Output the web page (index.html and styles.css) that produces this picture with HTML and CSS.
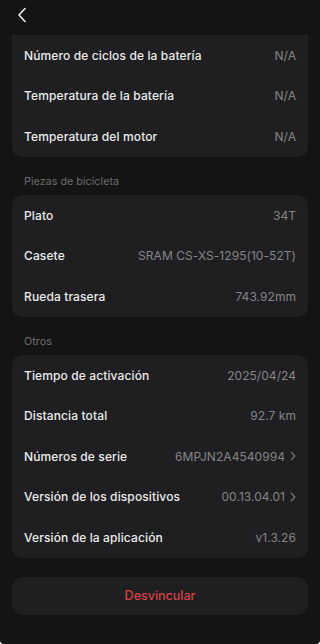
FILE: index.html
```html
<!DOCTYPE html>
<html lang="es">
<head>
<meta charset="utf-8">
<link rel="stylesheet" href="styles.css">
</head>
<body>
<div class="screen">
  <header class="topbar">
    <svg class="back" width="10" height="16" viewBox="0 0 10 16"><path d="M8 1.5 L2 8 L8 14.5" fill="none" stroke="#ececec" stroke-width="1.6" stroke-linecap="round" stroke-linejoin="round"/></svg>
  </header>
  <main class="content">
    <section class="card card-first">
      <div class="row"><span class="label">Número de ciclos de la batería</span><span class="value">N/A</span></div>
      <div class="row"><span class="label">Temperatura de la batería</span><span class="value">N/A</span></div>
      <div class="row"><span class="label">Temperatura del motor</span><span class="value">N/A</span></div>
    </section>
    <h2 class="section-title">Piezas de bicicleta</h2>
    <section class="card">
      <div class="row"><span class="label">Plato</span><span class="value">34T</span></div>
      <div class="row"><span class="label">Casete</span><span class="value">SRAM CS-XS-1295(10-52T)</span></div>
      <div class="row"><span class="label">Rueda trasera</span><span class="value">743.92mm</span></div>
    </section>
    <h2 class="section-title">Otros</h2>
    <section class="card">
      <div class="row"><span class="label">Tiempo de activación</span><span class="value">2025/04/24</span></div>
      <div class="row"><span class="label">Distancia total</span><span class="value">92.7 km</span></div>
      <div class="row"><span class="label">Números de serie</span><span class="value">6MPJN2A4540994<svg class="chev" width="6" height="10" viewBox="0 0 6 10"><path d="M1.2 1.2 L4.8 5 L1.2 8.8" fill="none" stroke="#7c7c7e" stroke-width="1.2" stroke-linecap="round" stroke-linejoin="round"/></svg></span></div>
      <div class="row"><span class="label">Versión de los dispositivos</span><span class="value">00.13.04.01<svg class="chev" width="6" height="10" viewBox="0 0 6 10"><path d="M1.2 1.2 L4.8 5 L1.2 8.8" fill="none" stroke="#7c7c7e" stroke-width="1.2" stroke-linecap="round" stroke-linejoin="round"/></svg></span></div>
      <div class="row"><span class="label">Versión de la aplicación</span><span class="value">v1.3.26</span></div>
    </section>
    <button class="unlink">Desvincular</button>
  </main>
</div>
</body>
</html>
```
FILE: styles.css
```css
html, body {
  margin: 0;
  padding: 0;
  background: #ffffff;
}
body {
  font-family: Inter, "Noto Sans", Roboto, sans-serif;
  -webkit-font-smoothing: antialiased;
}
.screen {
  width: 320px;
  height: 644px;
  background: #141414;
  border-radius: 0 0 4px 4px;
  overflow: hidden;
}
.topbar {
  height: 35px;
  display: flex;
  align-items: center;
  padding-left: 17px;
}
.back {
  display: block;
  margin-top: -5px;
}
.content {
  padding: 0 12px;
}
.card {
  background: #1f1f21;
  border-radius: 10px;
  padding: 0 12px;
}
.card-first {
  border-radius: 0 0 10px 10px;
}
.row {
  height: 40.5px;
  display: flex;
  align-items: center;
  justify-content: space-between;
}
.label {
  color: #ececec;
  font-size: 12px;
  font-weight: 500;
  letter-spacing: 0.12px;
}
.value {
  color: #858587;
  font-size: 12px;
  letter-spacing: 0.05px;
  display: flex;
  align-items: center;
  gap: 5px;
}
.chev {
  display: block;
}
.section-title {
  margin: 18.5px 0 6px 12px;
  height: 14px;
  line-height: 14px;
  font-size: 10.8px;
  font-weight: 400;
  color: #6b6b6d;
}
.unlink {
  display: block;
  width: 100%;
  height: 38px;
  margin-top: 19px;
  border: none;
  border-radius: 10px;
  background: #1f1f21;
  color: #d8414a;
  font-family: inherit;
  font-size: 12.5px;
  font-weight: 500;
}
```
